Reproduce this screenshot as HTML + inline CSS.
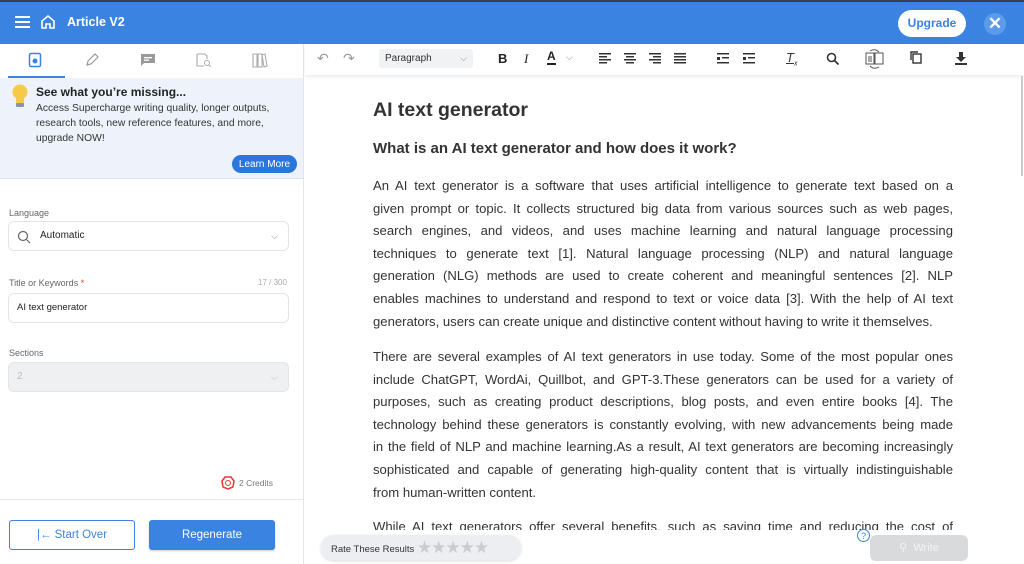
<!DOCTYPE html><html><head><style>
*{box-sizing:border-box;margin:0;padding:0}
body{width:1024px;height:564px;overflow:hidden;font-family:"Liberation Sans",Arial,sans-serif;background:#fff;position:relative}
.abs{position:absolute}
.hdr{left:0;top:0;width:1024px;height:44px;background:#3b83e0;border-top:2px solid #3a3f47}
.side{left:0;top:44px;width:304px;height:520px;border-right:1px solid #e3e5e8;background:#fff}
.lbl{font-size:9px;color:#666}
.inp{border:1px solid #e2e4e8;border-radius:6px;height:30px;left:8px;width:281px;background:#fff;font-size:10px;color:#222;line-height:28px}
.ln{text-align:justify;text-align-last:justify;white-space:nowrap;height:22.6px;line-height:22.6px}
.ln.l{text-align-last:left}
.txt{left:373px;width:580px;font-size:13.1px;color:#333}
.tb{top:44px;left:305px;width:719px;height:31px;background:#fff;box-shadow:0 2px 3px rgba(0,0,0,.08)}
</style></head><body>
<div class="abs hdr">
 <div class="abs" style="left:15px;top:14px;width:15px;height:2px;background:#fff;box-shadow:0 5px 0 #fff,0 10px 0 #fff"></div>
 <svg class="abs" style="left:40px;top:12px" width="16" height="16" viewBox="0 0 16 16"><path d="M2 7L8 2l6 5v7H10v-4H6v4H2z" fill="none" stroke="#fff" stroke-width="1.6"/></svg>
 <div class="abs" style="left:67px;top:13px;color:#fff;font-size:12.5px;font-weight:bold">Article V2</div>
 <div class="abs" style="left:898px;top:8px;width:68px;height:27px;border-radius:14px;background:#fff;color:#3b83e0;font-size:12px;font-weight:bold;text-align:center;line-height:27px">Upgrade</div>
 <div class="abs" style="left:984px;top:11px;width:22px;height:22px;border-radius:50%;background:#5c9aea;color:#fff;font-size:17px;font-weight:bold;text-align:center;line-height:22px">✕</div>
</div>
<div class="abs side">
 <svg class="abs" style="left:28px;top:8px" width="14" height="16"><rect x="1.5" y="1.5" width="11" height="13" rx="1.5" fill="none" stroke="#3b83e0" stroke-width="1.5"/><circle cx="7" cy="9" r="2.5" fill="#3b83e0"/></svg>
 <svg class="abs" style="left:84px;top:8px" width="16" height="16"><path d="M3 13l1-4 7-7 3 3-7 7z" fill="none" stroke="#999" stroke-width="1.2"/></svg>
 <svg class="abs" style="left:140px;top:9px" width="16" height="14"><path d="M1 1h14v9H4l-3 3z" fill="#999"/><rect x="4" y="4" width="8" height="1.3" fill="#fff"/><rect x="4" y="6.5" width="5" height="1.3" fill="#fff"/></svg>
 <svg class="abs" style="left:196px;top:9px" width="16" height="14"><path d="M1 1h8l2 2v3M1 1v12h7" fill="none" stroke="#aaa" stroke-width="1.1"/><circle cx="11" cy="10" r="2.5" fill="none" stroke="#aaa"/><path d="M13 12l2 2" stroke="#aaa"/></svg>
 <svg class="abs" style="left:252px;top:8px" width="16" height="16"><path d="M1 2h4v13H1zM6 2h4v13H6zM10 3l3-1 2 12-3 1z" fill="none" stroke="#aaa" stroke-width="1.1"/></svg>
 <div class="abs" style="left:8px;top:32px;width:57px;height:2px;background:#3b83e0"></div>
 <div class="abs" style="left:0;top:34px;width:303px;height:101px;background:#eef3fb;border-bottom:1px solid #dfe2e6"></div>
 <svg class="abs" style="left:11px;top:40px" width="18" height="26"><circle cx="9" cy="8" r="7.5" fill="#f7c948"/><rect x="5" y="14" width="8" height="6" fill="#f7c948"/><rect x="5" y="19" width="8" height="4" rx="1" fill="#8a96a8"/></svg>
 <div class="abs" style="left:36px;top:41px;font-size:12px;font-weight:bold;color:#222">See what you’re missing...</div>
 <div class="abs" style="left:36px;top:57px;font-size:10.3px;color:#333;line-height:15px">Access Supercharge writing quality, longer outputs,<br>research tools, new reference features, and more,<br>upgrade NOW!</div>
 <div class="abs" style="left:232px;top:111px;width:65px;height:18px;border-radius:9px;background:#2a76dd;color:#fff;font-size:10px;text-align:center;line-height:19px">Learn More</div>
 <div class="abs lbl" style="left:9px;top:164px">Language</div>
 <div class="abs inp" style="top:177px"><svg class="abs" style="left:8px;top:8px" width="14" height="14"><circle cx="6" cy="6" r="4.5" fill="none" stroke="#666" stroke-width="1.2"/><path d="M9.5 9.5l3.5 3.5" stroke="#666" stroke-width="1.2"/></svg><span class="abs" style="left:31px;top:0">Automatic</span><span class="abs" style="right:10px;top:0;color:#888;font-size:9px">⌵</span></div>
 <div class="abs lbl" style="left:9px;top:234px">Title or Keywords <span style="color:#e33">*</span></div>
 <div class="abs lbl" style="left:258px;top:234px;color:#aaa;font-size:8px">17 / 300</div>
 <div class="abs inp" style="top:249px"><span class="abs" style="left:8px;top:0;font-size:9.5px">AI text generator</span></div>
 <div class="abs lbl" style="left:9px;top:304px">Sections</div>
 <div class="abs inp" style="top:318px;background:#eef0f2"><span class="abs" style="left:8px;top:0;color:#bbb">2</span><span class="abs" style="right:10px;top:0;color:#bbb;font-size:9px">⌵</span></div>
 <svg class="abs" style="left:221px;top:432px" width="14" height="14"><path d="M4 1h6l3 4-1 6-5 2-5-2-1-6z" fill="none" stroke="#e33" stroke-width="1.5"/><circle cx="7" cy="7" r="2.5" fill="none" stroke="#e33"/></svg>
 <div class="abs" style="left:239px;top:434px;font-size:8.5px;color:#777">2 Credits</div>
 <div class="abs" style="left:0;top:455px;width:303px;height:1px;background:#e5e7ea"></div>
 <div class="abs" style="left:9px;top:476px;width:126px;height:30px;border:1.5px solid #3b83e0;border-radius:3px;color:#3b83e0;font-size:11.5px;text-align:center;line-height:28px">|← Start Over</div>
 <div class="abs" style="left:149px;top:476px;width:126px;height:30px;background:#3b83e0;border-radius:3px;color:#fff;font-size:11.5px;text-align:center;line-height:30px;box-shadow:0 1px 2px rgba(0,0,0,.2)">Regenerate</div>
</div>
<div class="abs tb">
 <span class="abs" style="left:12px;top:6px;color:#999;font-size:14px">↶</span><span class="abs" style="left:38px;top:6px;color:#999;font-size:14px">↷</span>
 <div class="abs" style="left:74px;top:5px;width:94px;height:19px;background:#f1f2f4;border-radius:3px;font-size:10px;color:#333;line-height:19px;padding-left:6px">Paragraph<span class="abs" style="right:6px;color:#888;font-size:9px">⌵</span></div>
 <span class="abs" style="left:193px;top:7px;font-weight:bold;font-size:13px;color:#222">B</span>
 <span class="abs" style="left:219px;top:7px;font-style:italic;font-size:13px;font-family:'Liberation Serif';color:#222">I</span>
 <span class="abs" style="left:242px;top:6px;font-size:12px;color:#222;border-bottom:2px solid #222;line-height:13px;font-weight:bold">A</span><span class="abs" style="left:261px;top:8px;font-size:9px;color:#888">⌵</span>
 <svg class="abs" style="left:294px;top:9px" width="90" height="12" fill="#333"><g><rect x="0" y="0" width="12" height="1.5"/><rect x="0" y="3" width="8" height="1.5"/><rect x="0" y="6" width="12" height="1.5"/><rect x="0" y="9" width="8" height="1.5"/></g><g transform="translate(25,0)"><rect x="0" y="0" width="12" height="1.5"/><rect x="2" y="3" width="8" height="1.5"/><rect x="0" y="6" width="12" height="1.5"/><rect x="2" y="9" width="8" height="1.5"/></g><g transform="translate(50,0)"><rect x="0" y="0" width="12" height="1.5"/><rect x="4" y="3" width="8" height="1.5"/><rect x="0" y="6" width="12" height="1.5"/><rect x="4" y="9" width="8" height="1.5"/></g><g transform="translate(75,0)"><rect x="0" y="0" width="12" height="1.5"/><rect x="0" y="3" width="12" height="1.5"/><rect x="0" y="6" width="12" height="1.5"/><rect x="0" y="9" width="12" height="1.5"/></g></svg>
 <svg class="abs" style="left:412px;top:9px" width="40" height="12" fill="#333"><rect x="0" y="0" width="12" height="1.5"/><rect x="5" y="4" width="7" height="1.5"/><rect x="0" y="4" width="3" height="3"/><rect x="0" y="9" width="12" height="1.5"/><g transform="translate(26,0)"><rect x="0" y="0" width="12" height="1.5"/><rect x="5" y="4" width="7" height="1.5"/><rect x="0" y="4" width="3" height="3"/><rect x="0" y="9" width="12" height="1.5"/></g></svg>
 <span class="abs" style="left:481px;top:6px;font-style:italic;font-size:13px;color:#333;text-decoration:underline">T<sub style="font-size:7px">x</sub></span>
 <svg class="abs" style="left:521px;top:8px" width="14" height="14"><circle cx="5.5" cy="5.5" r="4" fill="none" stroke="#333" stroke-width="1.6"/><path d="M8.5 8.5l4 4" stroke="#333" stroke-width="1.8"/></svg>
 <svg class="abs" style="left:559px;top:4px" width="22" height="22"><rect x="2" y="5" width="8" height="11" fill="none" stroke="#555"/><rect x="11" y="5" width="8" height="11" fill="none" stroke="#555"/><path d="M4 9h4M4 11h4M4 13h4M6 3q5-3 9 1M15 19q-5 3-9-1" fill="none" stroke="#555"/></svg>
 <svg class="abs" style="left:604px;top:6px" width="14" height="14"><rect x="4" y="4" width="8" height="9" fill="none" stroke="#333" stroke-width="1.4"/><path d="M2 10V2h7" fill="none" stroke="#333" stroke-width="1.4"/></svg>
 <svg class="abs" style="left:649px;top:7px" width="14" height="14"><path d="M5 1h4v5h3l-5 5-5-5h3z" fill="#333"/><rect x="1" y="12" width="12" height="2" fill="#333"/></svg>
</div>
<div class="abs" style="left:1021px;top:76px;width:2px;height:100px;background:#ccc"></div>
<div class="abs" style="left:373px;top:99px;font-size:19.5px;font-weight:bold;color:#333">AI text generator</div>
<div class="abs" style="left:373px;top:140px;font-size:15px;font-weight:bold;color:#333">What is an AI text generator and how does it work?</div>
<div class="abs txt" style="top:175px">
<div class="ln">An AI text generator is a software that uses artificial intelligence to generate text based on a</div>
<div class="ln">given prompt or topic. It collects structured big data from various sources such as web pages,</div>
<div class="ln">search engines, and videos, and uses machine learning and natural language processing</div>
<div class="ln">techniques to generate text [1]. Natural language processing (NLP) and natural language</div>
<div class="ln">generation (NLG) methods are used to create coherent and meaningful sentences [2]. NLP</div>
<div class="ln">enables machines to understand and respond to text or voice data [3]. With the help of AI text</div>
<div class="ln l">generators, users can create unique and distinctive content without having to write it themselves.</div>
</div>
<div class="abs txt" style="top:346px">
<div class="ln">There are several examples of AI text generators in use today. Some of the most popular ones</div>
<div class="ln">include ChatGPT, WordAi, Quillbot, and GPT-3.These generators can be used for a variety of</div>
<div class="ln">purposes, such as creating product descriptions, blog posts, and even entire books [4]. The</div>
<div class="ln">technology behind these generators is constantly evolving, with new advancements being made</div>
<div class="ln">in the field of NLP and machine learning.As a result, AI text generators are becoming increasingly</div>
<div class="ln">sophisticated and capable of generating high-quality content that is virtually indistinguishable</div>
<div class="ln l">from human-written content.</div>
</div>
<div class="abs txt" style="top:516px;height:14px;overflow:hidden">
<div class="ln">While AI text generators offer several benefits, such as saving time and reducing the cost of</div>
</div>
<div class="abs" style="left:305px;top:530px;width:715px;height:34px;background:#fff"></div>
<div class="abs" style="left:321px;top:535px;width:200px;height:25px;border-radius:13px;background:#eceef1;box-shadow:0 1px 3px rgba(0,0,0,.15);font-size:9.5px;color:#333;line-height:25px;padding-left:10px">Rate These Results <span style="color:#ccc;font-size:17px;letter-spacing:-1px;vertical-align:-1px">★★★★★</span></div>
<div class="abs" style="left:857px;top:529px;width:13px;height:13px;border:1px solid #3b83e0;border-radius:50%;color:#3b83e0;font-size:9px;text-align:center;line-height:12px">?</div>
<div class="abs" style="left:870px;top:535px;width:98px;height:26px;border-radius:6px;background:#d9dadc;color:#f4f4f4;font-size:11px;text-align:center;line-height:26px">⚲ &nbsp;Write</div>
</body></html>
